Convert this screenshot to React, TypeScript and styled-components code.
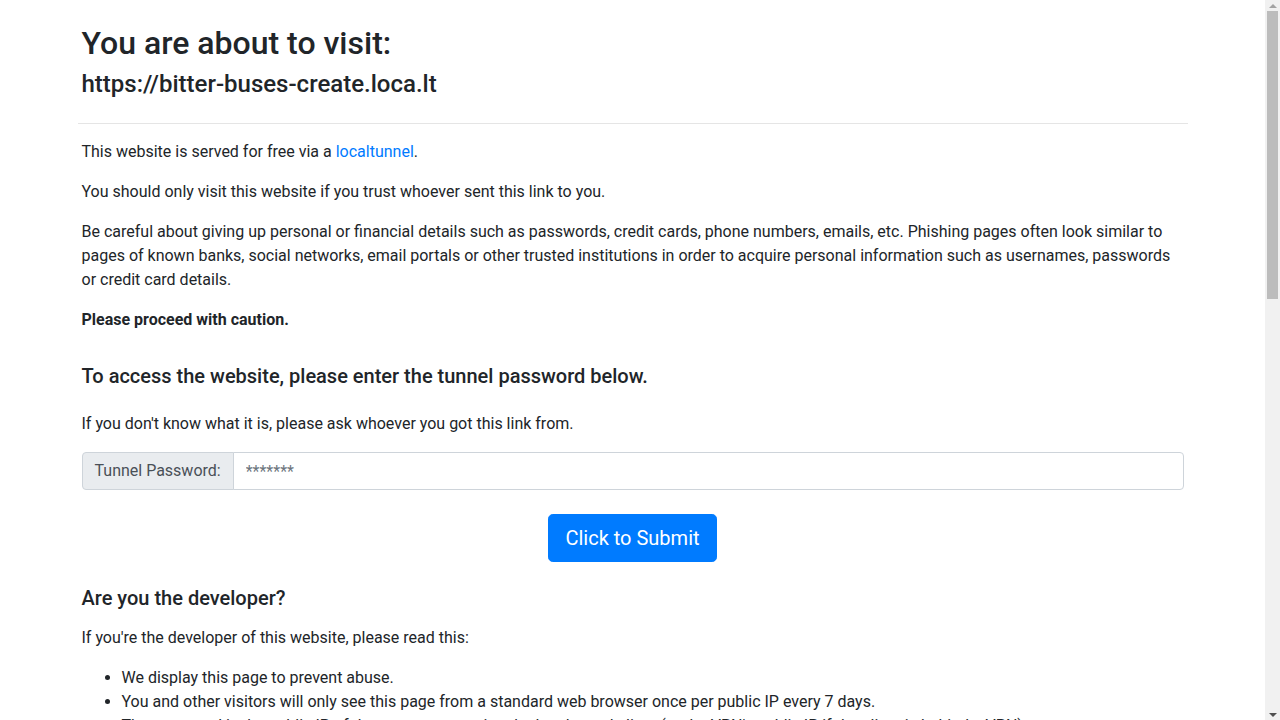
import React from "react";
import styled, { createGlobalStyle } from "styled-components";

const GlobalStyle = createGlobalStyle`
  *, *::before, *::after { box-sizing: border-box; }
  html, body { margin: 0; padding: 0; }
  body {
    font-family: Roboto, "Liberation Sans", Arial, sans-serif;
    font-size: 16px;
    line-height: 1.5;
    color: #212529;
    background: #fff;
    margin-right: 15px;
  }
`;

const ScrollTrack = styled.div`
  position: fixed;
  top: 0;
  right: 0;
  width: 15px;
  height: 100vh;
  background: #f1f1f1;
  display: flex;
  flex-direction: column;
  align-items: center;
  z-index: 10;
`;

const ScrollButton = styled.div<{ $down?: boolean }>`
  width: 15px;
  height: 11px;
  flex: 0 0 auto;
  display: flex;
  align-items: center;
  justify-content: center;
  margin-top: ${(p) => (p.$down ? "auto" : "0")};
  &::after {
    content: "";
    width: 0;
    height: 0;
    border-left: 4px solid transparent;
    border-right: 4px solid transparent;
    ${(p) =>
      p.$down
        ? "border-top: 4px solid #505050;"
        : "border-bottom: 4px solid #a3a3a3;"}
  }
`;

const ScrollThumb = styled.div`
  width: 11px;
  height: 288px;
  background: #bcbcbc;
  flex: 0 0 auto;
`;

const Container = styled.div`
  max-width: 1140px;
  margin: 0 auto;
  padding: 20px 15px 40px;
`;

const Header = styled.header`
  padding: 4px 4px 0;
`;

const Title = styled.h2`
  font-size: 32px;
  font-weight: 500;
  line-height: 1.2;
  margin: 0 0 8px;
`;

const Url = styled.h4`
  font-size: 24px;
  font-weight: 500;
  line-height: 1.2;
  margin: 0 0 8px;
`;

const Rule = styled.hr`
  margin: 24px 0 16px;
  border: 0;
  border-top: 1px solid rgba(0, 0, 0, 0.1);
  height: 0;
`;

const Body = styled.main`
  padding: 0 4px;
`;

const Para = styled.p`
  margin: 0 0 16px;
`;

const Link = styled.a`
  color: #007bff;
  text-decoration: none;
`;

const SectionTitle = styled.h5<{ $top?: number; $bottom?: number }>`
  font-size: 20px;
  font-weight: 500;
  line-height: 1.2;
  margin: ${(p) => p.$top ?? 32}px 0 ${(p) => p.$bottom ?? 16}px;
`;

const InputGroup = styled.div`
  display: flex;
  align-items: stretch;
  width: 100%;
  margin-bottom: 24px;
`;

const InputLabel = styled.span`
  display: flex;
  align-items: center;
  padding: 6px 12px;
  font-size: 16px;
  line-height: 1.5;
  color: #495057;
  background: #e9ecef;
  border: 1px solid #ced4da;
  border-radius: 4px 0 0 4px;
  white-space: nowrap;
`;

const Input = styled.input`
  flex: 1 1 auto;
  min-width: 0;
  height: 38px;
  margin-left: -1px;
  padding: 6px 12px;
  font-family: inherit;
  font-size: 16px;
  line-height: 1.5;
  color: #495057;
  background: #fff;
  border: 1px solid #ced4da;
  border-radius: 0 4px 4px 0;
  outline: none;
  &::placeholder { color: #6c757d; opacity: 1; }
`;

const ButtonRow = styled.div`
  display: flex;
  justify-content: center;
`;

const SubmitButton = styled.button`
  font-family: inherit;
  font-size: 20px;
  line-height: 1.5;
  font-weight: 400;
  padding: 8px 16px;
  color: #fff;
  background: #007bff;
  border: 1px solid #007bff;
  border-radius: 4.8px;
  cursor: pointer;
`;

const List = styled.ul`
  margin: 0 0 16px;
  padding-left: 40px;
`;

const Code = styled.code`
  font-family: "Liberation Mono", monospace;
  font-size: 14px;
  color: #e83e8c;
`;

export default function App() {
  return (
    <>
      <GlobalStyle />
      <Container>
        <Header>
          <Title>You are about to visit:</Title>
          <Url>https://bitter-buses-create.loca.lt</Url>
        </Header>
        <Rule />
        <Body>
          <Para>
            This website is served for free via a <Link href="#">localtunnel</Link>.
          </Para>
          <Para>You should only visit this website if you trust whoever sent this link to you.</Para>
          <Para>
            Be careful about giving up personal or financial details such as passwords, credit cards, phone
            numbers, emails, etc. Phishing pages often look similar to pages of known banks, social networks,
            email portals or other trusted institutions in order to acquire personal information such as
            usernames, passwords or credit card details.
          </Para>
          <Para>
            <strong>Please proceed with caution.</strong>
          </Para>

          <SectionTitle $top={32} $bottom={24}>
            To access the website, please enter the tunnel password below.
          </SectionTitle>
          <Para>If you don't know what it is, please ask whoever you got this link from.</Para>
          <InputGroup>
            <InputLabel>Tunnel Password:</InputLabel>
            <Input type="text" placeholder="*******" />
          </InputGroup>
          <ButtonRow>
            <SubmitButton>Click to Submit</SubmitButton>
          </ButtonRow>

          <SectionTitle $top={24} $bottom={16}>
            Are you the developer?
          </SectionTitle>
          <Para>If you're the developer of this website, please read this:</Para>
          <List>
            <li>We display this page to prevent abuse.</li>
            <li>You and other visitors will only see this page from a standard web browser once per public IP every 7 days.</li>
            <li>
              The password is the public IP of the computer running the localtunnel client (or the VPN's public
              IP if the client is behind a VPN).
            </li>
            <li>Webhook, IPN, and other non-browser requests will be directly tunnelled to your localhost.</li>
          </List>

          <SectionTitle $top={32} $bottom={16}>
            If you're the developer, to bypass this page:
          </SectionTitle>
          <Para>You can bypass this reminder page by doing one of the following:</Para>
          <List>
            <li>
              Set and send a <Code>bypass-tunnel-reminder</Code> request header (its value can be anything).
            </li>
            <li>
              or, Set and send a custom / non-standard browser <Code>User-Agent</Code> request header.
            </li>
          </List>
          <Para>
            Please note that this page is only shown to visitors using a standard web browser. Requests made
            by scripts, command line tools and servers are passed directly to the tunnel.
          </Para>

          <SectionTitle $top={32} $bottom={16}>
            Why is there a password?
          </SectionTitle>
          <Para>
            Free tunnels are sometimes used to host phishing pages and other malicious content. Asking
            visitors for the tunnel password makes sure that only people who know the developer can reach
            the website behind the tunnel.
          </Para>
          <Para>
            Once the correct password has been entered, you will not be asked for it again from the same
            public IP for the next 7 days.
          </Para>
        </Body>
      </Container>
      <ScrollTrack aria-hidden="true">
        <ScrollButton />
        <ScrollThumb />
        <ScrollButton $down />
      </ScrollTrack>
    </>
  );
}
